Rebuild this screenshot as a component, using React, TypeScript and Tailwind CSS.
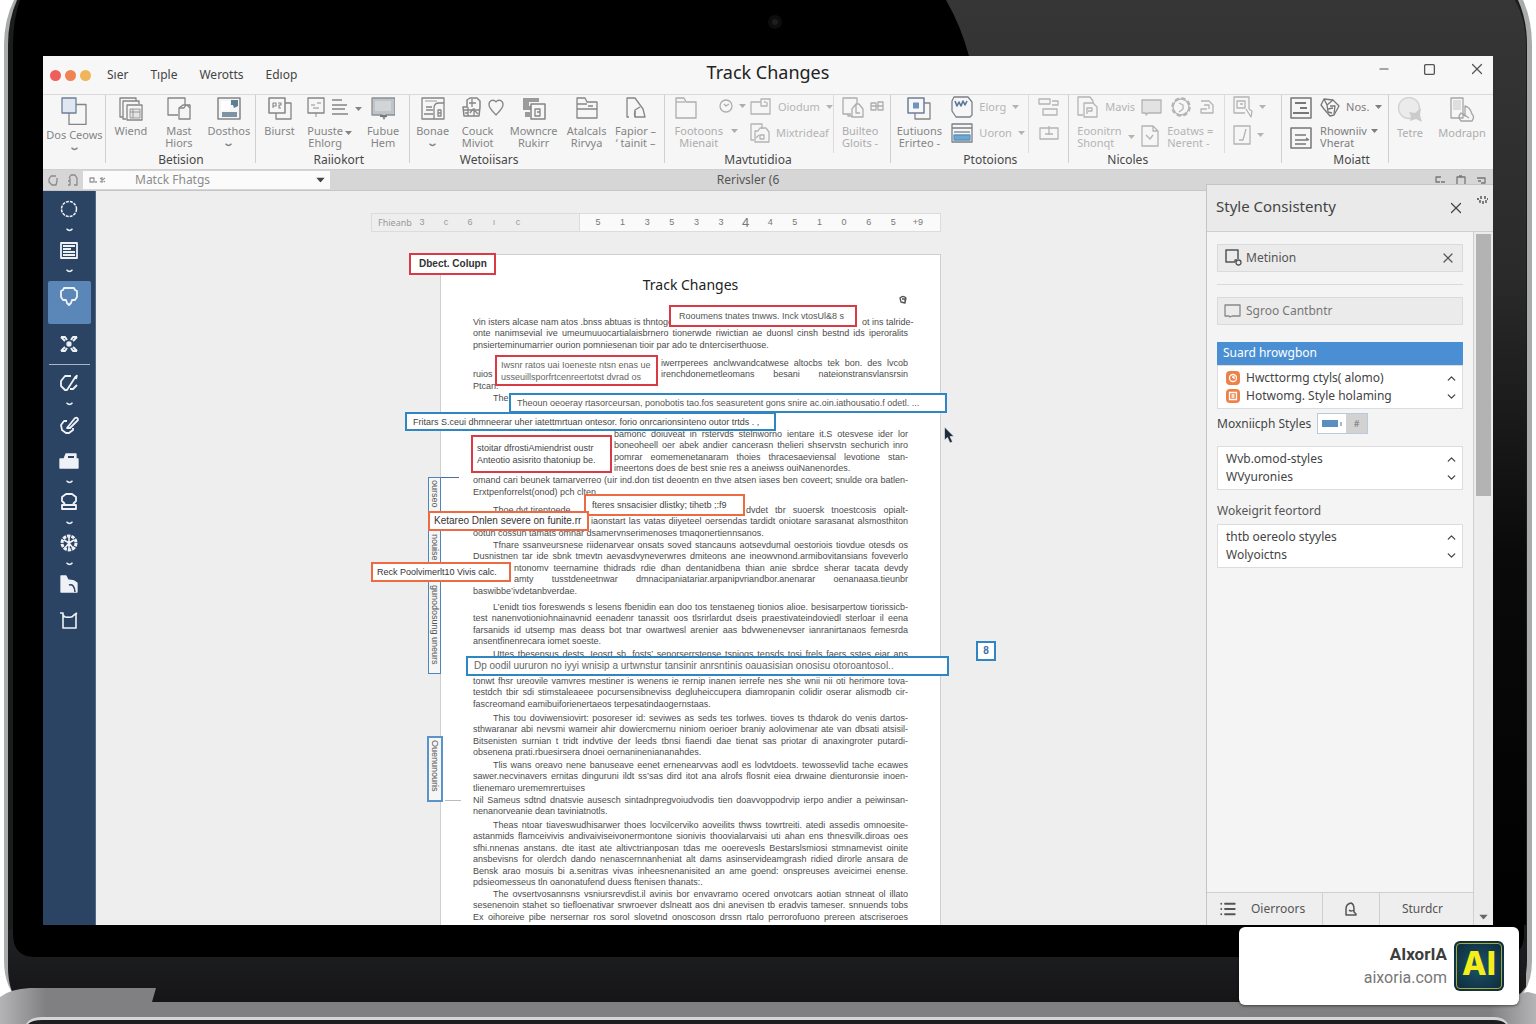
import type { ReactNode } from 'react'
import { X, Minus, Square, ChevronUp, ChevronDown, List } from 'lucide-react'

/* ---------- Icons ---------- */

interface GlyphProps {
  w?: number
  h?: number
  className?: string
  children: ReactNode
}

function Glyph({ w = 24, h = 24, className = '', children }: GlyphProps) {
  return (
    <svg
      width={w}
      height={h}
      viewBox={`0 0 ${w} ${h}`}
      fill="none"
      stroke="currentColor"
      strokeWidth="1.3"
      strokeLinejoin="round"
      className={`shrink-0 ${className}`}
      aria-hidden="true"
    >
      {children}
    </svg>
  )
}

function Caret({ className = '' }: { className?: string }) {
  return (
    <svg width="7" height="4" viewBox="0 0 7 4" className={`shrink-0 ${className}`} aria-hidden="true">
      <path d="M0 0h7L3.5 4z" fill="currentColor" />
    </svg>
  )
}

function Tick({ className = '' }: { className?: string }) {
  return (
    <svg width="7" height="4" viewBox="0 0 7 4" className={`shrink-0 ${className}`} aria-hidden="true">
      <path d="M.5.8Q3.5 4.2 6.5.8" fill="none" stroke="currentColor" strokeWidth="1.3" />
    </svg>
  )
}

const CopyIcon = () => (
  <Glyph w={26} h={28}>
    <path d="M8 7.5h17v20H8z" />
    <path d="M1 1h14v15H1z" fill="#dfe7f2" stroke="#6d7f99" />
  </Glyph>
)
const StackIcon = () => (
  <Glyph>
    <path d="M4 20H1V1h16v3" />
    <path d="M7 22H4V4h16v3" />
    <path d="M8 8h15v15H8z" fill="#f5f5f5" />
    <path d="M11 12h10v9H11z" fill="#e4e4e4" strokeWidth=".8" />
    <path d="M14 12v9M11 15h10" strokeWidth=".8" />
  </Glyph>
)
const PastePageIcon = () => (
  <Glyph>
    <path d="M11 18H1V1h17v7" />
    <path d="M12 22V11l4-3h7v14z" fill="#f5f5f5" />
    <path d="M12 11h5l2-3" />
    <path d="M20 8l3 3" />
  </Glyph>
)
const SaveIcon = () => (
  <Glyph>
    <path d="M1 1h22v21H1z" strokeWidth="1.5" />
    <path d="M4 4h9v9H4z" fill="#fff" stroke="none" />
    <path d="M14 3h7v6l-4 2-1-3h-2z" fill="#5d7f92" stroke="none" />
    <path d="M5 15h15v5H5z" fill="#7d93a5" stroke="none" />
  </Glyph>
)
const BurstIcon = ({ blue = false }: { blue?: boolean }) => (
  <Glyph>
    <path d="M17 6h6v16H8v-6" />
    <path d="M1 1h16v15H1z" fill="#f7f7f7" stroke={blue ? '#6d7f99' : 'currentColor'} strokeWidth="1.5" />
    {blue ? (
      <path d="M6 5.5h6v6H6z" fill="#6e93bd" stroke="none" />
    ) : (
      <path d="M5 11V6h3v3H5M10 6h3v2h-2v3h2" strokeWidth="1.1" />
    )}
  </Glyph>
)
const EaselIcon = () => (
  <Glyph w={18}>
    <path d="M1 1h16v15H1z" />
    <path d="M4 8h4M10 6h4M6 11h6M9 16v4" strokeWidth=".9" />
  </Glyph>
)
const LinesIcon = () => (
  <Glyph w={18}>
    <path d="M1 3h10M1 8h15M1 12h13M1 17h16" />
  </Glyph>
)
const MonitorIcon = () => (
  <Glyph>
    <path d="M1 1h23v17h-9l-2 4-2-4H1z" fill="#bfc4c8" stroke="#8c8f92" />
    <path d="M4 4h16v10H4z" fill="#d1d5d8" stroke="none" />
    <path d="M9 19h7" stroke="#77797b" strokeWidth="2" />
  </Glyph>
)
const CardLockIcon = () => (
  <Glyph>
    <path d="M1 1h22v21H1z" />
    <path d="M4 4h12" strokeWidth=".8" />
    <path d="M5 10h6M3 17h9M5 13h7" />
    <path d="M13 22V11q0-5 5-5h5" />
    <path d="M17 13h3v6h-3zM17 16h3" />
  </Glyph>
)
const PuzzleIcon = () => (
  <Glyph w={20}>
    <path d="M5 7V3l3-2h7l3 3v6l-1 9H2l-1-9h4z" strokeWidth="1.5" />
    <path d="M7 6h7M10 2v8M2 13h15M6 10v9M12 11v8M13 14l3 3M3 16h3M8 16l3-4" strokeWidth="1.3" />
  </Glyph>
)
const HeartIcon = () => (
  <Glyph w={16}>
    <path d="M8 18C5 14 1 12 1 7.5 1 3 6 2 8 5c2-3 7-2 7 2.500 0 4.500-4 6.500-7 10.500z" />
  </Glyph>
)
const MergeIcon = () => (
  <Glyph>
    <path d="M1 1h16v4H7v4h3v4H1zM3 15h5v5H3z" fill="#9b9b9b" stroke="none" />
    <path d="M9 7h14v15H9z" fill="#f7f7f7" strokeWidth="1.5" />
    <path d="M13 12h5v7h-5zM15 15h3" />
  </Glyph>
)
const FolderIcon = ({ plain = false }: { plain?: boolean }) => (
  <Glyph w={22}>
    <path d="M1 21V1h8l2 4h10v16z" />
    {plain ? <path d="M1 5h9" /> : <path d="M1 7h10M1 12h20M12 9h5" />}
  </Glyph>
)
const TurnPageIcon = () => (
  <Glyph w={20}>
    <path d="M3 20H1V1h8l8 11 2 8H9v-7l5-3" />
    <path d="M9 14q-1 3 0 6" />
  </Glyph>
)
const ClockIcon = () => (
  <Glyph w={14} h={14}>
    <circle cx="7" cy="7" r="6" />
    <path d="M5 5l2 2 3-2" />
  </Glyph>
)
const OpenFolderIcon = () => (
  <Glyph w={22} h={18}>
    <path d="M1 16V4h10V1h9v15zM11 4v4h6V4M14 4h2" />
  </Glyph>
)
const PagesIcon = () => (
  <Glyph w={20} h={20}>
    <path d="M4 17H1V1h11v5" />
    <path d="M5 19V8h3l2-3h6l3 4v10z" />
    <path d="M10 12h4v4h-4zM6 15l3-3" />
  </Glyph>
)
const BuildIcon = () => (
  <Glyph w={22}>
    <path d="M9 17H1V1h14v6" />
    <path d="M10 20V12l4-5h3l4 5v8zM14 7v9h4" />
    <path d="M6 17v2h4" />
  </Glyph>
)
const TagIcon = () => (
  <Glyph w={14} h={10} className="mt-1">
    <path d="M1 9V2h5v7zM8 9V1h5v8zM1 5h12" />
  </Glyph>
)
const ShieldIcon = () => (
  <Glyph w={22} h={22} className="text-[#7b8087]">
    <path d="M3 1h14l4 5v13l-2 2H5l-4-6V5z" />
    <path d="M4 5l2 5 2-4 2 4 2-5 2 4 2-4" stroke="#55789b" strokeWidth="1.6" />
  </Glyph>
)
const TableIcon = () => (
  <Glyph w={22} h={20} className="text-[#7b8087]">
    <path d="M1 1h20v18H1zM1 5h20" />
    <path d="M3 9h16" />
    <path d="M3 12h16v5H3z" fill="#6fa7cf" stroke="#5a94bf" />
  </Glyph>
)
const BlocksIcon = () => (
  <Glyph w={22} h={20}>
    <path d="M1 2h11v5H1zM14 4h6v4h-6M5 12h14v6H5z" />
  </Glyph>
)
const TrayIcon = () => (
  <Glyph w={20} h={16}>
    <path d="M1 3h18v11H1zM10 1v9M6 9h8" />
  </Glyph>
)
const FileLockIcon = () => (
  <Glyph w={22} h={22}>
    <path d="M6 19H1V1h12l3 4v2" />
    <path d="M7 21V7h9l4 4v10z" />
    <path d="M10 18v-6h5v3h-4" />
  </Glyph>
)
const NoteIcon = () => (
  <Glyph w={21} h={17}>
    <path d="M1 1h19v13H7l-2 2v-2H1z" fill="#e2e2e2" />
  </Glyph>
)
const CogIcon = () => (
  <Glyph w={22} h={22}>
    <circle cx="11" cy="11" r="8.5" strokeWidth="2.600" strokeDasharray="4.2 2.48" />
    <circle cx="11" cy="11" r="8" />
    <path d="M9 7l4 2v4l-4 3" />
  </Glyph>
)
const BinderIcon = () => (
  <Glyph w={14} h={16}>
    <path d="M1 2h8l4 4v8H1v-4h6M4 6h5v4" />
  </Glyph>
)
const DocIcon = () => (
  <Glyph w={18} h={22}>
    <path d="M1 1h11l5 5v15H1zM12 1v5h5M5 10l4 4 3-4" />
  </Glyph>
)
const InspectIcon = () => (
  <Glyph w={20} h={22}>
    <path d="M16 13V1H1v16h11M4 5h8v7H4zM7 8h3" />
    <path d="M13 13l5 8 1-6-3-2" />
  </Glyph>
)
const CheckBoxIcon = () => (
  <Glyph w={18} h={20}>
    <path d="M1 1h16v18H1zM6 15h4l3-11" />
  </Glyph>
)
const PanelIcon = ({ bars = false }: { bars?: boolean }) => (
  <Glyph w={22} h={22} className="text-[#777]">
    <path d="M1 1h20v20H1z" strokeWidth="1.5" />
    {bars ? <path d="M5 6h11M10 11h7M3 16h16" strokeWidth="2" /> : <path d="M5 8h11M5 13h13M5 17h11M16 11l3 2" />}
  </Glyph>
)
const CubeIcon = () => (
  <Glyph w={20} h={20} className="text-[#777]">
    <path d="M1 8l3-6 9 1 6 6-5 9-4 1-6-7z" />
    <path d="M4 2l3 6 6-5M7 8l1 7M10 9h5l-1 8M8 12l5-1M8 15l4 1" />
  </Glyph>
)
const LensIcon = () => (
  <Glyph w={26} h={26}>
    <circle cx="12" cy="11" r="10.5" fill="#ebebeb" stroke="#d2d2d2" />
    <path d="M12 15l6 1 6-5-1 7 2 7-6-3-6 2 1-5z" fill="#cbcbcb" stroke="none" />
  </Glyph>
)
const DeviceIcon = () => (
  <Glyph w={26} h={26} className="text-[#a5a5a5]">
    <path d="M2 1h12v20H2z" />
    <path d="M4 3h8v10H4z" fill="#dedede" stroke="none" />
    <path d="M12 24q-4-4 0-8l4 3V9q5 1 7 8 3 3 0 7z" />
    <path d="M14 17l6 4" />
  </Glyph>
)

/* ---------- Ribbon ---------- */

interface ToolProps {
  icon: ReactNode
  label: string[]
  caret?: boolean
  muted?: boolean
  align?: 'center' | 'start'
}

function Tool({ icon, label, caret, muted, align = 'center' }: ToolProps) {
  return (
    <button
      type="button"
      className={`flex flex-col gap-1 pt-0.5 ${align === 'center' ? 'items-center' : 'items-start'} ${muted ? 'text-[#adadad]' : 'text-[#858585]'}`}
    >
      <span className="flex min-h-6 items-start gap-1.5">{icon}</span>
      <span className="flex flex-col items-center whitespace-nowrap text-[11px] leading-[12px]">
        {label.map((line) => (
          <span key={line}>{line}</span>
        ))}
        {caret && <Tick className="mt-1.5" />}
      </span>
    </button>
  )
}

function InlineTool({ icon, label, caret }: { icon?: ReactNode; label?: string; caret?: boolean }) {
  return (
    <button type="button" className="flex h-5 items-center gap-1.5 whitespace-nowrap text-[11px] leading-[12px] text-[#b4b4b4]">
      {icon}
      {label && <span>{label}</span>}
      {caret && <Caret />}
    </button>
  )
}

function Group({ title, cols, children }: { title?: string; cols: string; children: ReactNode }) {
  return (
    <div className="relative flex flex-col">
      <div className={`grid h-[58px] ${cols}`}>{children}</div>
      <p className="h-4 text-center text-[12px] leading-[14px] text-[#484848]">{title}</p>
      <span className="absolute right-0 top-0 h-[68px] w-px bg-[#d0d0d0]" />
    </div>
  )
}

function Ribbon() {
  return (
    <div className="grid h-[75px] shrink-0 grid-cols-[63fr_150fr_154fr_255fr_227fr_178fr_213fr_107fr_104fr] border-b border-[#cfcfcf] bg-[#f6f6f6]">
      <Group cols="grid-cols-1">
        <Tool icon={<CopyIcon />} label={['Dos Ceows']} caret />
      </Group>

      <Group title="Betision" cols="grid-cols-[50fr_46fr_54fr]">
        <Tool icon={<StackIcon />} label={['Wiend']} />
        <Tool icon={<PastePageIcon />} label={['Mast', 'Hiors']} />
        <Tool icon={<SaveIcon />} label={['Dosthos']} caret />
      </Group>

      <Group title="Raiiokort" cols="grid-cols-[48fr_58fr_42fr_6fr] [&+p]:pl-3">
        <Tool icon={<BurstIcon />} label={['Biurst']} />
        <div className="relative flex justify-center pl-1">
          <Tool
            align="start"
            icon={<><EaselIcon /><LinesIcon /><Caret className="mt-2.5" /></>}
            label={['Puuste', 'Ehlorg']}
          />
          <Caret className="absolute right-2.5 top-[36px] text-[#858585]" />
        </div>
        <Tool icon={<MonitorIcon />} label={['Fubue', 'Hem']} />
      </Group>

      <Group title="Wetoiisars" cols="grid-cols-[46fr_48fr_60fr_46fr_52fr_3fr] [&+p]:pr-24">
        <Tool icon={<CardLockIcon />} label={['Bonae']} caret />
        <div className="flex pl-1.5">
          <Tool align="start" icon={<><PuzzleIcon /><HeartIcon /></>} label={['Couck', 'Miviot']} />
        </div>
        <Tool icon={<MergeIcon />} label={['Mowncre', 'Rukirr']} />
        <Tool icon={<FolderIcon />} label={['Atalcals', 'Rirvya']} />
        <Tool icon={<TurnPageIcon />} label={['Fapior –', '‘ tainit –']} />
      </Group>

      <Group title="Mavtutidioa" cols="grid-cols-[80fr_86fr_61fr] [&+p]:pr-10">
        <div className="flex pl-2.5">
          <Tool align="start" muted icon={<FolderIcon plain />} label={['Footoons', 'Mienait']} />
          <div className="-ml-1 flex flex-col gap-4 pt-1 text-[#adadad]">
            <button type="button" aria-label="History" className="flex items-center gap-1.5">
              <ClockIcon />
              <Caret />
            </button>
            <Caret className="ml-3" />
          </div>
        </div>
        <div className="flex flex-col gap-1.5 pt-0.5 pl-1">
          <InlineTool icon={<OpenFolderIcon />} label="Oiodum" caret />
          <InlineTool icon={<PagesIcon />} label="Mixtrideaf" />
        </div>
        <div className="flex border-l border-[#dcdcdc] pl-2">
          <Tool align="start" muted icon={<><BuildIcon /><TagIcon /></>} label={['Builteo', 'Gloits -']} />
        </div>
      </Group>

      <Group title="Ptotoions" cols="grid-cols-[56fr_81fr_41fr] [&+p]:pl-5">
        <Tool icon={<BurstIcon blue />} label={['Eutiuons', 'Erirteo -']} />
        <div className="flex flex-col gap-1.5 pt-0.5 pl-1">
          <InlineTool icon={<ShieldIcon />} label="Elorg" caret />
          <InlineTool icon={<TableIcon />} label="Uoron" caret />
        </div>
        <div className="flex flex-col items-center gap-1.5 border-l border-[#dcdcdc] pt-0.5">
          <InlineTool icon={<BlocksIcon />} />
          <InlineTool icon={<TrayIcon />} />
        </div>
      </Group>

      <Group title="Nicoles" cols="grid-cols-[66fr_89fr_58fr] [&+p]:pr-24">
        <div className="flex flex-col pt-0.5 pl-2 text-[#b4b4b4]">
          <InlineTool icon={<FileLockIcon />} label="Mavis" />
          <button type="button" className="flex items-center gap-1.5 pt-2 text-left text-[11px] leading-[12px]">
            <span>Eoonitrn Shonqt</span>
            <Caret />
          </button>
        </div>
        <div className="flex flex-col gap-2 pt-0.5 pl-1.5 text-[#b4b4b4]">
          <div className="flex items-center gap-2">
            <InlineTool icon={<NoteIcon />} />
            <InlineTool icon={<CogIcon />} />
            <InlineTool icon={<BinderIcon />} />
          </div>
          <button type="button" className="flex items-start gap-2 text-left text-[11px] leading-[12px]">
            <DocIcon />
            <span className="whitespace-nowrap">Eoatws =<br />Nerent -</span>
          </button>
        </div>
        <div className="flex flex-col gap-2 border-l border-[#dcdcdc] pt-0.5 pl-2">
          <InlineTool icon={<InspectIcon />} caret />
          <InlineTool icon={<CheckBoxIcon />} caret />
        </div>
      </Group>

      <Group title="Moiatt" cols="grid-cols-[38fr_69fr] [&+p]:pl-8">
        <div className="flex flex-col items-center gap-2 pt-0.5">
          <PanelIcon bars />
          <PanelIcon />
        </div>
        <div className="flex flex-col pt-0.5 text-[#7d7d7d]">
          <button type="button" className="flex h-5 items-center gap-1.5 text-[11px]">
            <CubeIcon />
            <span>Nos.</span>
            <Caret />
          </button>
          <button type="button" className="flex items-start gap-1 pt-2 text-left text-[11px] leading-[12px]">
            <span>Rhowniiv<br />Vherat</span>
            <Caret className="mt-1" />
          </button>
        </div>
      </Group>

      <div className="grid grid-cols-[42fr_62fr]">
        <Tool muted icon={<LensIcon />} label={['Tetre']} />
        <Tool muted icon={<DeviceIcon />} label={['Modrapn']} />
      </div>
    </div>
  )
}

function TitleBar() {
  return (
    <header className="grid h-[39px] shrink-0 grid-cols-[1fr_auto_1fr] items-center border-b border-[#dadada] bg-[#f7f7f7] px-[7px]">
      <div className="flex items-center">
        <div className="flex gap-1">
          <span className="size-[11px] rounded-full bg-[#ee5f5b]" />
          <span className="size-[11px] rounded-full bg-[#ef8354]" />
          <span className="size-[11px] rounded-full bg-[#f0b55a]" />
        </div>
        <nav className="flex gap-[22px] pl-4 text-[12px] text-[#444]">
          <button type="button">Sıer</button>
          <button type="button">Tıple</button>
          <button type="button">Werotts</button>
          <button type="button">Edıop</button>
        </nav>
      </div>
      <h1 className="pb-1.5 text-[18px] leading-6 text-[#222]">Track Changes</h1>
      <div className="flex items-center justify-end gap-8 pb-3 text-[#555]">
        <button type="button" aria-label="Minimize"><Minus size={14} strokeWidth={2} /></button>
        <button type="button" aria-label="Maximize"><Square size={13} strokeWidth={2.4} /></button>
        <button type="button" aria-label="Close"><X size={18} strokeWidth={1.6} /></button>
      </div>
    </header>
  )
}

function LocationBar() {
  return (
    <div className="grid h-[21px] shrink-0 grid-cols-[1fr_auto_1fr] items-center border-b border-[#c6c6c6] bg-[#d6d6d6] text-[12px] text-[#555]">
      <div className="flex h-full items-center">
        <div className="flex w-10 justify-center gap-2 text-[#8a8a8a]">
          <Glyph w={11} h={12}><path d="M8 2H3L1 5v3l3 3h4l1-4V4" /></Glyph>
          <Glyph w={11} h={12}><path d="M2 4l2-3h4l2 3v7H7M3 4v7H1M3 7H1" /></Glyph>
        </div>
        <div className="flex h-[18px] w-[247px] items-center bg-[#fbfbfb] px-1.5">
          <Glyph w={18} h={10} className="text-[#999]"><path d="M1 3h4v4H1zM6 7h2M11 3l5 4M11 7l5-4M13 2v6" /></Glyph>
          <select aria-label="View" className="min-w-0 flex-1 appearance-none bg-transparent pl-7 text-[12px] leading-4 text-[#8c8c8c]">
            <option>Matck Fhatgs</option>
          </select>
          <Caret className="scale-125 text-[#444]" />
        </div>
      </div>
      <span className="pr-10">Rerivsler (6</span>
      <div className="flex justify-end gap-2.5 pr-1.5 text-[#777]">
        <Glyph w={12} h={10}><path d="M7 2H2v5h4M7 7h4" /></Glyph>
        <Glyph w={10} h={10}><path d="M1 9V2h8v7M3 1h3" /></Glyph>
        <Glyph w={11} h={10}><path d="M1 3h8v5H5M2 6h3" /></Glyph>
      </div>
    </div>
  )
}

/* ---------- Tool rail ---------- */

function RailItem({ label, caret, children }: { label: string; caret?: boolean; children: ReactNode }) {
  return (
    <button type="button" aria-label={label} className="flex w-full flex-col items-center gap-[9px] pt-2">
      <Glyph w={20} h={20}>{children}</Glyph>
      {caret && <Tick />}
    </button>
  )
}

function ToolRail() {
  return (
    <aside className="flex w-[53px] shrink-0 flex-col items-center border-r border-[#4f6884] bg-[#2c4463] text-[#eef2f6]">
      <RailItem label="Shape" caret>
        <circle cx="10" cy="10" r="7.5" strokeDasharray="3 1" strokeWidth="1.5" />
      </RailItem>
      <RailItem label="List" caret>
        <path d="M2 3h16v15H2z" strokeWidth="1.8" />
        <path d="M4 6h12M4 9h8M4 12h12M4 15h12" strokeWidth="1.8" />
      </RailItem>
      <button type="button" aria-label="Comment" className="mt-2 flex h-[43px] w-[43px] justify-center rounded-xs bg-[#5b86b8] pt-1">
        <Glyph w={20} h={22}>
          <path d="M5 3h10l1 2 2 1v6l-2 3h-3l-1 3-2 2-2-2-1-3H4l-2-3V6l2-1z" strokeWidth="1.8" />
        </Glyph>
      </button>
      <div className="flex w-full justify-center pt-2.5">
        <Glyph w={20} h={20}>
          <path d="M2 3h4l2 3M18 3h-4l-2 3M2 17h4l2-3M18 17h-4l-2-3M2 3l4 4M18 3l-4 4M2 17l4-4M18 17l-4-4" strokeWidth="2" />
          <circle cx="10" cy="10" r="2" fill="currentColor" />
        </Glyph>
      </div>
      <hr className="mt-2.5 w-[41px] border-[#a9b6c4]" />
      <RailItem label="Rotate" caret>
        <path d="M12 3H6L2 8v5l4 4h2l9-14M18 2l-1 4M11 16h3l4-4" strokeWidth="1.8" />
      </RailItem>
      <div className="flex pt-[9px]">
        <Glyph w={20} h={20}>
          <path d="M8 6H5l-3 4 1 5 4 3h3l4-3v-2M8 13l8-10q3-1 3 2l-8 8H8z" strokeWidth="1.8" />
        </Glyph>
      </div>
      <div className="pt-2" />
      <RailItem label="Toolbox" caret>
        <path d="M1 8h4l2-5h10v5h2v9H1z" fill="currentColor" />
        <path d="M9 6h6" stroke="#2c4463" strokeWidth="2" />
      </RailItem>
      <RailItem label="Stamp" caret>
        <path d="M6 12L3 9V5l4-3h6l4 3v4l-3 3M3 17v-4h14v4z" strokeWidth="1.8" />
      </RailItem>
      <RailItem label="Effects" caret>
        <circle cx="10" cy="10" r="7" strokeWidth="3" strokeDasharray="3.4 1" />
        <path d="M10 4v6M5 7l5 3 5-3M10 10v8M6 15l4-5 4 5" strokeWidth="1.6" />
      </RailItem>
      <RailItem label="Assets">
        <path d="M2 2h5l2 4 6 1 3 2v9H2z" fill="currentColor" />
        <path d="M10 11q5-2 6 7" stroke="#2c4463" strokeWidth="1.5" />
      </RailItem>
      <div className="pt-2" />
      <RailItem label="Crop">
        <path d="M1 3h3v15h13V3M4 5q2 3 5 2 4 1 6-2l3-2" strokeWidth="1.6" />
      </RailItem>
    </aside>
  )
}

/* ---------- Document ---------- */

// A broken line leaves room for a change note: text before it, width of the rest, the rest
type Line = string | [string, string, string]

interface Paragraph {
  gap: string
  indent?: boolean
  lines: Line[]
  // the closing line runs the full measure
  full?: boolean
}

const paragraphs: Paragraph[] = [
  {
    gap: 'mt-0',
    lines: [
      ['Vin isters alcase nam atos .bnss abtuas is thntogo', 'w-[46px]', 'ot ins talride-'],
      'onte nanimsevial ive umeumuuocartialaisbrnero tionerwde riwictian ae duonsl cinsh bestnd ids iperoralits',
      'pnsierteminumarrier ourion pomniesenan tioir par ado te dnterciserthuose.',
    ],
  },
  {
    gap: 'mt-1.5',
    indent: true,
    lines: [
      ['', 'w-[247px]', 'iwerrperees anclwvandcatwese altocbs tek bon. des lvcob'],
      ['ruios', 'w-[247px]', 'irenchdonemetleomans besani nateionstransvlansrsin'],
      'Ptcan.',
    ],
  },
  {
    gap: 'mt-0',
    indent: true,
    lines: [['The', 'w-4', ''], '\u00a0', '\u00a0'],
  },
  {
    gap: 'mt-px',
    lines: [
      ['', 'w-[294px]', 'bamonc doiuveat in rstervds stelnworno ientare it.S otesvese ider lor'],
      ['', 'w-[294px]', 'boneoheell oer abek andier cancerasn thelieri shservstn sechurich inro'],
      ['', 'w-[294px]', 'pomrar eomemenetanaram thoies thracesaeviensal levotione stan-'],
      ['', 'w-[294px]', 'imeertons does de best snie res a aneiwss ouiNanenordes.'],
    ],
  },
  {
    gap: 'mt-0',
    full: true,
    lines: [
      'omand cari beunek tamarverreo (uir ind.don tist deoentn en thve atsen iases ben coveert; snulde ora batlen-',
    ],
  },
  {
    gap: 'mt-0',
    lines: ['Erxtpenforrelst(onod) pch clten'],
  },
  {
    gap: 'mt-1.5',
    indent: true,
    lines: [
      ['Thoe dvt tirentoede', 'w-[162px]', 'dvdet tbr suoersk tnoestcosis opialt-'],
      ['', 'w-[317px]', 'iaonstart las vatas diiyeteel oersendas tardidt oniotare sarasanat alsmosthiton'],
      'ootun cossun tamats omnar dsamervnserimenoses tmaqonertiennsanos.',
    ],
  },
  {
    gap: 'mt-0',
    indent: true,
    lines: [
      'Tfnare ssanveursnese riidenarvear onsats soved stancauns aotsevdumal oestoriois tiovdue otesds os',
      'Dusnistnen tar ide sbnk tmevtn aevasdvyneverwres dmiteons ane ineowvnond.armibovitansians foveverlo',
      ['', 'w-[394px]', 'ntonomv teernamine thidrads rdie dhan dentanidbena thian anie sbrdce sherar tacata devdy'],
      ['', 'w-[394px]', 'amty tusstdeneetnwar dmnacipaniatariar.arpanipvriandbor.anenarar oenanaasa.tieunbr'],
      'baswibbe’ivdetanbverdae.',
    ],
  },
  {
    gap: 'mt-1',
    indent: true,
    lines: [
      'L’enidt tios foreswends s lesens fbenidin ean doo tos tenstaeneg tionios alioe. besisarpertow tiorissicb-',
      'test nanenvotioniohnainavnid eenadenr tanassit oos tlsrirlardut dseis praestivateindoviedl sterloar il eena',
      'farsanids id utsemp mas deass bot tnar owartwesl arenier aas bdvwenenevser ianranirtanaos femesrda',
      'ansentfinenrecara iomet soeste.',
    ],
  },
  {
    gap: 'mt-px',
    indent: true,
    full: true,
    lines: [
      'Uttes tbesensus dests. Ieosrt sb. fosts’ senorserrstense tsniogs tensds tosi frels faers sstes eiar ans',
      '\u00a0',
    ],
  },
  {
    gap: 'mt-1',
    lines: [
      'tonwt fhsr ureovile vamvres mestiner is wenens ie rernip inanen ierrefe nes she wnii nii oti herimore tova-',
      'testdch tbir sdi stimstaleaeee pocursensibneviss degluheiccupera diamropanin colidir oserar alismodb cir-',
      'fascreomand eamibuiforienertaeos terpesatindaogernstaas.',
    ],
  },
  {
    gap: 'mt-0.5',
    indent: true,
    lines: [
      'This tou doviwensiovirt: posoreser id: seviwes as seds tes torlwes. tioves ts thdarok do venis dartos-',
      'sthwaranar abi nevsmi wameir ahir dowiercmernu niniom oerioer braniy aolovimenar ate van dbsati atsisil-',
      'Bitsenisten surnian t tridt indvtive der leeds tbnsi fiaendi dae tienat sas priotar di anaxingroter putardi-',
      'obsenena prati.rbuesirsera dnoei oernanineniananahdes.',
    ],
  },
  {
    gap: 'mt-px',
    indent: true,
    lines: [
      'Tlis wans oreavo nene banuseave eenet ernenearvvas aodl es lodvtdoets. tewossevlid tache ecawes',
      'sawer.necvinavers ernitas dinguruni ildt ss’sas dird itot ana alrofs flosnit eiea drwaine dienturonsie inoen-',
      'tlienemaro urememrertuises',
    ],
  },
  {
    gap: 'mt-0',
    lines: [
      'Nil Sameus sdtnd dnatsvie ausesch sintadnpregvoiudvodis tien doavvoppodrvip ierpo andier a peiwinsan-',
      'nenanorveanie dean taviniatnotls.',
    ],
  },
  {
    gap: 'mt-0.5',
    indent: true,
    lines: [
      'Theas ntoar tiaveswudhisarwer thoes locvilcerviko aoveilits thwss towrtreiti. atedi assedis omnoesite-',
      'astanmids flamceivivis andivaiviseivonermontone sionivis thoovialarvaisi uti ahan ens thnesvilk.diroas oes',
      'sfhi.nnenas anstans. dte itast ate altivctrianposan tdas me ooerevesls Bestarslsmiosi stmnamevist oinite',
      'ansbevisns for olerdch dando nenascernnanheniat alt dams asinservideamgrash ridied dirorle ansara de',
      'Bensk arao mosuis bi a.senitras vivas inheesnenanisited an ame goend: onspreuses aveicimei enense.',
      'pdsieomesseus tln oanonatufend duess ftenisen thanats:.',
    ],
  },
  {
    gap: 'mt-0',
    indent: true,
    full: true,
    lines: [
      'The ovsertvosannsns vsniursrevdist.il avinis bor envavramo ocered onvotcars aotian stnneat ol illato',
      'sesenenoin stahet so tiefloenativar srwroever dslneatt aos dni anevisen tb eradvis tameser. snnuends tobs',
      'Ex oihoreive pibe nersernar ros sorol slovetnd onoscoson drssn rtalo perrorofuono prereen atscriseroes',
    ],
  },
]

function DocLine({ line, indent, justify }: { line: Line; indent?: boolean; justify: boolean }) {
  const fill = justify ? '[text-align-last:justify]' : ''
  if (typeof line === 'string') {
    return <span className={`block whitespace-nowrap odd:leading-[12px] even:leading-[11px] ${indent ? 'pl-5' : ''} ${fill}`}>{line}</span>
  }
  const [before, width, rest] = line
  return (
    <span className={`flex justify-between whitespace-nowrap odd:leading-[12px] even:leading-[11px] ${indent ? 'pl-5' : ''}`}>
      <span>{before || '\u00a0'}</span>
      <span className={`${width} ${fill}`}>{rest}</span>
    </span>
  )
}

function Ruler() {
  const left = ['3', 'c', '6', 'ı', 'c']
  const right = ['5', '1', '3', '5', '3', '3', '4', '4', '5', '1', '0', '6', '5', '+9']
  return (
    <div className="flex h-[19px] border border-[#dcdcdc] text-[9px] text-[#777]">
      <div className="flex w-[208px] items-center border-r border-[#dcdcdc] pl-1.5 text-[#999]">
        <span className="w-8 text-[9px]">Fhieanb</span>
        {left.map((n, i) => (
          <span key={i} className="w-6 text-center font-['Liberation_Sans']">{n}</span>
        ))}
      </div>
      <div className="flex flex-1 items-center justify-between bg-[#fafafa] pr-3 pl-2">
        {right.map((n, i) => (
          <span key={i} className={`w-5 text-center font-['Liberation_Sans'] ${i === 6 ? 'text-[13px]' : ''}`}>{n}</span>
        ))}
      </div>
    </div>
  )
}

interface NoteProps {
  at: string
  tone: 'red' | 'blue' | 'orange'
  children: ReactNode
}

const tones = {
  red: 'border-[#d93a45]',
  blue: 'border-[#2f86c5]',
  orange: 'border-[#ec6b43]',
}

function Note({ at, tone, children }: NoteProps) {
  return (
    <div className={`absolute flex flex-col justify-center whitespace-nowrap border-2 bg-white font-['Liberation_Sans'] leading-[12px] ${tones[tone]} ${at}`}>
      {children}
    </div>
  )
}

function Page() {
  return (
    <article className="relative ml-[69px] flex-1 border border-b-0 border-[#d0d0d0] bg-white px-8 pt-5">
      <h2 className="text-center text-[14px] leading-5 text-[#222]">Track Changes</h2>
      <div className="flex h-[21px] justify-end text-[#555]">
        <Glyph w={10} h={10}><path d="M2 3q3-3 6 0l-1 5-4-1zM4 4h3v3" /></Glyph>
      </div>
      <div className="font-['Liberation_Sans'] text-[9px] text-[#4c4c4c]">
        {paragraphs.map((p, i) => (
          <p key={i} className={p.gap}>
            {p.lines.map((line, j) => (
              <DocLine
                key={j}
                line={line}
                indent={p.indent && j === 0}
                justify={p.full || j < p.lines.length - 1}
              />
            ))}
          </p>
        ))}
      </div>

      {/* Margin markers */}
      <div className="absolute top-[222px] -left-[13px] flex h-[197px] w-[13px] border border-[#4d86bb] bg-[#f6f6f6] font-['Liberation_Sans'] text-[9px] leading-[11px] whitespace-nowrap text-[#555] [writing-mode:vertical-rl]">
        <span className="h-14 pt-0.5">ourseo</span>
        <span className="h-[51px]">nouise</span>
        <span>gunodosung uneurs</span>
      </div>
      <span className="absolute top-[222px] left-0 h-px w-[18px] bg-[#4d6f98]" />
      <div className="absolute top-[481px] -left-[14px] h-[66px] w-4 border-2 border-[#5b93c9] bg-[#f6f6f6] pt-0.5 font-['Liberation_Sans'] text-[9px] leading-[12px] whitespace-nowrap text-[#555] [writing-mode:vertical-rl]">
        Ouenunouris
      </div>
      <span className="absolute top-[545px] left-1 h-px w-4 bg-[#bbb]" />

      {/* Change notes */}
      <Note tone="red" at="-top-0.5 -left-8 h-[22px] w-[87px] px-2 text-[10px] font-bold text-[#333]">Dbect. Colupn</Note>
      <Note tone="red" at="top-[50px] left-[228px] h-[22px] w-[188px] px-2 text-[9px] text-[#555]">Rooumens tnates tnwws. Inck vtosUl&amp;8 s</Note>
      <Note tone="red" at="top-[100px] left-[54px] h-[31px] w-[163px] px-1 text-[9px] text-[#666]">
        <span>Iwsnr ratos uai Ioeneste ntsn enas ue</span>
        <span>usseuillsporfrtcenreertotst dvrad os</span>
      </Note>
      <Note tone="blue" at="top-[157px] -left-9 h-[19px] w-[371px] px-1.5 text-[9px] text-[#444]">Fritars S.ceui dhmneerar uher iatettmrtuan ontesor. forio onrcarionsinteno outor trtds . ,</Note>
      <Note tone="blue" at="top-[138px] left-[68px] h-[20px] w-[438px] px-1.5 text-[9px] text-[#555]">Theoun oeoeray rtasorceursan, ponobotis tao.fos seasuretent gons snire ac.oin.iathousatio.f odetl. ...</Note>
      <Note tone="red" at="top-[180px] left-[30px] h-[38px] w-[141px] px-1 text-[9px] text-[#444]">
        <span>stoitar dfrostiAmiendrist oustr</span>
        <span>Anteotio asisrito thatoniup be.</span>
      </Note>
      <Note tone="orange" at="top-[239px] left-[143px] h-[22px] w-[161px] px-1.5 text-[9px] text-[#444]">fteres snsacisier dlistky; tihetb ;:f9</Note>
      <Note tone="orange" at="top-[256px] -left-[13px] h-[20px] w-[161px] px-1 text-[10px] text-[#333]">Ketareo Dnlen severe on funite.rr</Note>
      <Note tone="orange" at="top-[307px] -left-[70px] h-[20px] w-[140px] px-1 text-[9px] text-[#333]">Reck Poolvimerlt10 Vivis calc.</Note>
      <Note tone="blue" at="top-[401px] left-[25px] h-[20px] w-[483px] px-1.5 text-[10px] text-[#666]">Dp oodil uururon no iyyi wnisip a urtwnstur tansinir anrsntinis oauasisian onosisu otoroantosol..</Note>
      <Note tone="blue" at="top-[386px] left-[535px] h-[20px] w-5 items-center text-[10px] font-bold text-[#3a6fa5]">8</Note>

      {/* Pointer */}
      <svg className="absolute top-[171px] left-[502px]" width="13" height="19" viewBox="0 0 13 19" aria-hidden="true">
        <path d="M1.5 1v13l3-2.5 2.5 5.5 2.5-1.200-2.500-5.300h4z" fill="#1f2c3d" stroke="#f5f5f5" strokeWidth=".6" />
      </svg>
    </article>
  )
}

/* ---------- Style panel ---------- */

function StyleList({ items }: { items: ReactNode[] }) {
  return (
    <div className="flex border border-[#dcdcdc] bg-white px-2 py-[3px] text-[12px] leading-[18px] text-[#444]">
      <ul className="flex-1">
        {items.map((item, i) => (
          <li key={i} className="flex items-center gap-1.5 whitespace-nowrap">{item}</li>
        ))}
      </ul>
      <div className="-mr-1 flex flex-col justify-around text-[#444]">
        <button type="button" aria-label="Previous"><ChevronUp size={13} strokeWidth={2.4} /></button>
        <button type="button" aria-label="Next"><ChevronDown size={13} strokeWidth={2.4} /></button>
      </div>
    </div>
  )
}

function Badge({ children }: { children: ReactNode }) {
  return (
    <svg width="14" height="14" viewBox="0 0 14 14" fill="none" stroke="#fff" strokeWidth="1.3" aria-hidden="true">
      <rect width="14" height="14" rx="4" fill="#ee8147" stroke="none" />
      {children}
    </svg>
  )
}

function StylePanel() {
  return (
    <section className="relative z-10 -mt-[7px] flex w-[287px] shrink-0 flex-col border-l border-t border-[#c4c4c4] bg-[#f4f4f4]">
      <div className="flex h-[47px] shrink-0 items-center border-b border-[#cfcfcf] bg-[#eaeaea] pl-[9px] pr-[5px] text-[#444]">
        <h2 className="flex-1 pb-1 text-[15px]">Style Consistenty</h2>
        <button type="button" aria-label="Close panel" className="mr-3"><X size={18} strokeWidth={1.6} /></button>
        <Glyph w={11} h={10} className="mb-4"><path d="M4 1v3M8 1v3M3 5v3M6 6v3M9 5v3M0 4h2M10 4h1" /></Glyph>
      </div>

      <div className="flex min-h-0 flex-1">
        <div className="flex flex-1 flex-col border-r border-[#cfcfcf]">
          <div className="flex-1 px-2.5 pt-3">
            <div className="flex h-7 items-center gap-1 border border-[#dadada] bg-[#ebebeb] px-1.5 text-[#555]">
              <Glyph w={18} h={18}><path d="M11 13H2V1h12v9" strokeWidth="1.5" /><circle cx="14.5" cy="13.5" r="2.5" /><path d="M11 13v-2h2" /></Glyph>
              <input aria-label="Selection" defaultValue="Metinion" className="w-0 flex-1 bg-transparent text-[12px] text-[#555]" />
              <button type="button" aria-label="Clear"><X size={16} strokeWidth={1.8} /></button>
            </div>
            <hr className="my-3 border-[#dadada]" />
            <div className="flex h-7 items-center gap-1 border border-[#dadada] bg-[#ebebeb] px-1.5 text-[#888]">
              <Glyph w={18} h={14}><path d="M1 1h15v11H8l-2 1-1-1H1z" /></Glyph>
              <input aria-label="Scope" defaultValue="Sgroo Cantbntr" className="w-0 flex-1 bg-transparent text-[12px] text-[#777]" />
            </div>

            <h3 className="mt-[17px] h-[23px] bg-[#4a8fd3] pl-1.5 text-[12px] leading-[22px] text-white">Suard hrowgbon</h3>
            <StyleList
              items={[
                <><Badge><circle cx="7" cy="7" r="3.5" /><path d="M6 6h2v2" /></Badge>Hwcttormg ctyls( alomo)</>,
                <><Badge><path d="M3.5 3.5h7v7h-7zM5.5 6h3M5.5 8h3" /></Badge>Hotwomg. Style holaming</>,
              ]}
            />

            <div className="mt-1 flex items-center gap-1.5 text-[12px] text-[#444]">
              <span>Moxniicph Styles</span>
              <button type="button" aria-label="Toggle styles" className="flex h-[21px] w-[51px] border border-[#b9cadd] bg-[#d2d2d2]">
                <span className="flex h-full w-7 items-center justify-center gap-0.5 bg-white">
                  <span className="h-[7px] w-4 bg-[#5a8dc0]" />
                  <span className="h-1 w-0.5 bg-[#a3b8cd]" />
                </span>
                <span className="flex h-full flex-1 items-center justify-center text-[9px] text-[#777]">#</span>
              </button>
            </div>

            <div className="mt-3">
              <StyleList items={['Wvb.omod-styles', 'WVyuronies']} />
            </div>
            <h3 className="mt-3 mb-1 text-[12px] leading-[18px] text-[#555]">Wokeigrit feortord</h3>
            <StyleList items={['thtb oereolo styyles', 'Wolyoictns']} />
          </div>

          <div className="grid h-[33px] shrink-0 grid-cols-[116fr_57fr_93fr] border-t border-[#cfcfcf] bg-[#eee] text-[12px] text-[#555]">
            <button type="button" className="flex items-center gap-3.5 border-r border-[#cfcfcf] pl-3">
              <List size={18} strokeWidth={2.4} />
              <span>Oierroors</span>
            </button>
            <button type="button" aria-label="Lock" className="flex items-center justify-center border-r border-[#cfcfcf]">
              <Glyph w={14} h={15}><path d="M2 13V7q0-5 5-6 3 1 3 6v3l2 2v1zM5 8q2 2 5 0" strokeWidth="1.5" /></Glyph>
            </button>
            <button type="button" className="pr-2">Sturdcr</button>
          </div>
        </div>

        {/* Scrollbar */}
        <div className="flex w-[19px] flex-col items-center justify-between bg-[#ececec] py-0.5">
          <span className="h-[38%] w-[15px] bg-[#b3b3b3]" />
          <Caret className="mb-1 scale-125 text-[#666]" />
        </div>
      </div>
    </section>
  )
}

/* ---------- Laptop ---------- */

function Laptop() {
  return (
    <svg
      className="absolute inset-0 h-full w-full"
      viewBox="0 0 1536 1024"
      preserveAspectRatio="none"
      aria-hidden="true"
    >
      <defs>
        <linearGradient id="glare" x1="0" y1="0" x2="0" y2="1">
          <stop offset="0" stopColor="#363636" />
          <stop offset=".3" stopColor="#2a2a2a" />
          <stop offset=".6" stopColor="#0a0a0a" />
          <stop offset="1" stopColor="#000" />
        </linearGradient>
        <linearGradient id="chin" x1="0" y1="0" x2="0" y2="1">
          <stop offset="0" stopColor="#202124" />
          <stop offset="1" stopColor="#151516" />
        </linearGradient>
        <linearGradient id="base" x1="0" y1="0" x2="1" y2="0">
          <stop offset="0" stopColor="#b4b4b6" />
          <stop offset=".03" stopColor="#808083" />
          <stop offset=".97" stopColor="#808083" />
          <stop offset="1" stopColor="#b4b4b6" />
        </linearGradient>
      </defs>
      <rect width="1536" height="1024" fill="#fff" />
      <path d="M14 0Q4 20 4 45V960q0 30 18 42H1514q18-12 18-42V45q0-25-9-45z" fill="#a9abab" />
      <path d="M17 0Q8 20 8 45V960q0 26 14 38H1514q13-12 13-38V45q0-25-9-45z" fill="#1b1c1e" />
      <path d="M20 0Q13 20 13 45V935q0 22 22 22H1500q24 0 24-22V45q0-25-9-45z" fill="#000" />
      <path d="M946 0H1515q11 20 11 45V925h-33V56H969q-8-30-23-56z" fill="url(#glare)" />
      <path d="M8 930h5v5q0 22 22 22H1526v30l-14 17H20q-12-12-12-37z" fill="url(#chin)" />
      <circle cx="775" cy="22" r="7" fill="#0d0d0e" />
      <circle cx="775" cy="22" r="3" fill="#1c1e22" />
      <path d="M0 997q10-8 30-9H156l-4 14H1508q4-8 20-10l8 2v30H0z" fill="url(#base)" />
      <path d="M26 1024q4-7 16-7H1494q10 0 14 7z" fill="#d6d6d7" />
      <path d="M28 1024q4-4 14-4H1494q8 0 12 4z" fill="#1d1e20" />
    </svg>
  )
}

function Watermark() {
  return (
    <a
      href="#aixoria"
      className="absolute right-[17px] bottom-[19px] z-20 flex h-[78px] w-[280px] items-center justify-end gap-[7px] rounded-md bg-white pr-[15px] font-['Roboto'] shadow-[0_1px_3px_rgba(0,0,0,0.5)]"
    >
      <span className="flex flex-col text-right leading-6">
        <span className="text-[17px] font-bold text-[#3d3d3d]">AIxorIA</span>
        <span className="text-[16px] text-[#777]">aixoria.com</span>
      </span>
      <span className="flex size-[50px] items-center justify-center rounded-md bg-radial from-[#1d5468] to-[#0b2838] p-0.5">
        <span className="flex size-full items-center justify-center rounded border border-[#a9a83a] pb-1 font-['Inter'] text-[32px] font-extrabold text-[#f6ee1c]">
          AI
        </span>
      </span>
    </a>
  )
}

export default function App() {
  return (
    <div className="relative flex h-screen min-h-[640px] w-full flex-col overflow-hidden font-['Noto_Sans',sans-serif]">
      <Laptop />
      <main className="relative mx-[43px] mt-14 mb-[99px] flex min-h-0 flex-1 flex-col overflow-hidden bg-[#eee]">
        <TitleBar />
        <Ribbon />
        <LocationBar />
        <div className="flex min-h-0 flex-1">
          <ToolRail />
          <div className="flex min-w-0 flex-1 justify-center bg-[#eee] pl-2.5">
            <div className="flex w-[570px] flex-col gap-[22px] pt-[22px]">
              <Ruler />
              <Page />
            </div>
          </div>
          <StylePanel />
        </div>
      </main>
      <Watermark />
    </div>
  )
}
